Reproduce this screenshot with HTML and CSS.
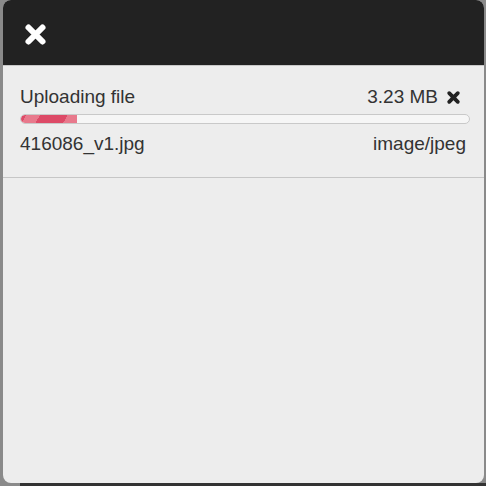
FILE: index.html
```html
<!DOCTYPE html>
<html>
<head>
<meta charset="utf-8">
<link rel="stylesheet" href="styles.css">
</head>
<body>
<div class="modal">
  <div class="modal-header">
    <svg class="close-icon" width="23" height="23" viewBox="0 0 23 23"><path d="M4.5 4.5 L18.5 18.5 M18.5 4.5 L4.5 18.5" stroke="#fff" stroke-width="6" stroke-linecap="round"/></svg>
  </div>
  <div class="upload">
    <div class="row">
      <span>Uploading file</span>
      <span class="size">3.23 MB
        <svg class="cancel-icon" width="15" height="15" viewBox="0 0 15 15"><path d="M3.2 3.2 L11.8 11.8 M11.8 3.2 L3.2 11.8" stroke="#222" stroke-width="3.8" stroke-linecap="round"/></svg>
      </span>
    </div>
    <div class="progress"><div class="progress-fill" style="width:12.5%"></div></div>
    <div class="row file-row">
      <span>416086_v1.jpg</span>
      <span class="type">image/jpeg</span>
    </div>
  </div>
</div>
</body>
</html>
```
FILE: styles.css
```css
html, body {
  margin: 0;
  padding: 0;
}
body {
  width: 486px;
  height: 486px;
  background: linear-gradient(#333, #333) no-repeat 20px 100% / 466px 3px, #8a8a8a;
  font-family: "Liberation Sans", Arial, sans-serif;
  overflow: hidden;
}
.modal {
  margin-left: 3px;
  width: 481px;
  height: 483px;
  background: #ededed;
  border-radius: 8px;
  overflow: hidden;
}
.modal-header {
  height: 66px;
  background: #222222;
  border-bottom: 1px solid #c8c8c8;
  box-sizing: border-box;
  display: flex;
  align-items: center;
  padding-left: 21px;
}
.close-icon {
  display: block;
  margin-top: 3px;
}
.upload {
  padding: 21px 17px 23px 17px;
  border-bottom: 1px solid #c6c6c6;
}
.row {
  display: flex;
  justify-content: space-between;
  align-items: center;
  font-size: 19px;
  line-height: 20px;
  color: #333;
}
.size {
  display: flex;
  align-items: center;
  gap: 8px;
}
.cancel-icon {
  display: block;
  margin-right: 6px;
}
.progress {
  margin-top: 7px;
  margin-right: -3px;
  height: 8px;
  border: 1px solid #c9c9c9;
  border-radius: 6px;
  background: #f6f6f6;
  overflow: hidden;
}
.progress-fill {
  height: 100%;
  border-radius: 6px 0 0 6px;
  background: repeating-linear-gradient(-60deg, #e8798c 0 12px, #dd4a67 12px 36px);
  background-color: #dd4a67;
}
.file-row {
  margin-top: 10px;
}
.type {
  margin-right: 1px;
}
```
